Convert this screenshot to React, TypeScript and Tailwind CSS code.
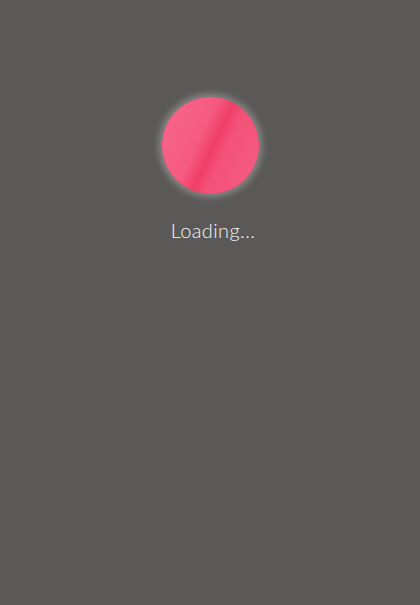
export default function App() {
  return (
    <div className="min-h-[605px] w-full bg-[#5a5958] flex flex-col items-center pt-[97px]">
      <div className="w-[97px] h-[97px] rounded-full bg-[linear-gradient(115deg,#f7678a_0%,#f55b80_40%,#f03e68_52%,#f45279_62%,#f55d80_100%)] shadow-[0_0_7px_3px_rgba(255,255,255,0.3)] ml-[1px]" />
      <p className="mt-[22px] ml-[6px] text-[20px] leading-[28px] font-light tracking-[0.4px] text-[#f4f4f4] [font-family:Lato,sans-serif]">
        Loading...
      </p>
    </div>
  );
}
